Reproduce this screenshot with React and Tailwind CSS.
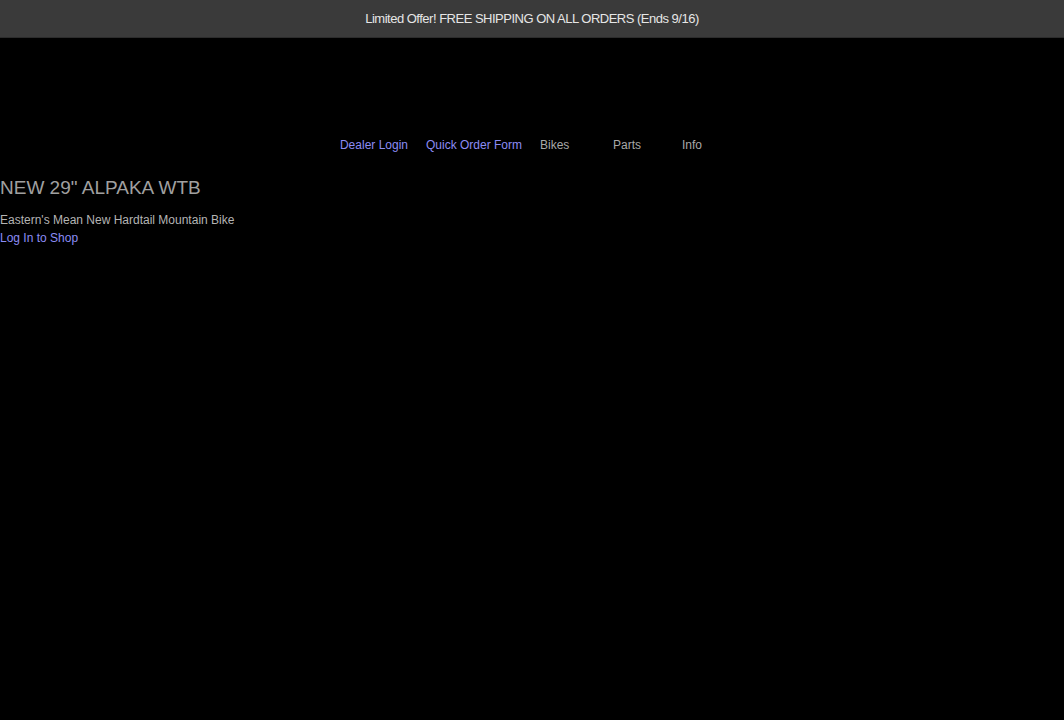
import React from 'react';

const navLinks = [
  { label: 'Dealer Login', blue: true, width: 'w-auto' },
  { label: 'Quick Order Form', blue: true, width: 'w-auto' },
  { label: 'Bikes', blue: false, width: 'w-[55px]' },
  { label: 'Parts', blue: false, width: 'w-[51px]' },
  { label: 'Info', blue: false, width: 'w-auto' },
];

const App = () => {
  return (
    <div className="min-h-screen bg-black font-['Liberation_Sans',Arial,sans-serif]">
      {/* promo bar */}
      <div className="h-[38px] bg-[#3a3a3a] border-b border-[#2c2c2c] flex items-center justify-center">
        <p className="text-[13px] tracking-[-0.5px] text-[#e6e6e6]">
          Limited Offer! FREE SHIPPING ON ALL ORDERS (Ends 9/16)
        </p>
      </div>

      {/* main nav */}
      <nav className="pt-[100px] flex justify-center pr-[22px]">
        <ul className="flex gap-[18px] text-[12px] leading-[14px]">
          {navLinks.map((link) => (
            <li key={link.label} className={link.width}>
              <a
                href="#"
                className={link.blue ? 'text-[#8c8cf5]' : 'text-[#a8a8a8]'}
              >
                {link.label}
              </a>
            </li>
          ))}
        </ul>
      </nav>

      {/* hero copy */}
      <section className="pt-[25px]">
        <h1 className="text-[19px] leading-[22px] font-light text-[#a0a0a0]">
          NEW 29" ALPAKA WTB
        </h1>
        <p className="mt-[12px] text-[12px] leading-[18px] text-[#b4b4b4]">
          Eastern's Mean New Hardtail Mountain Bike
        </p>
        <a href="#" className="block text-[12px] leading-[18px] text-[#8c8cf5]">
          Log In to Shop
        </a>
      </section>
    </div>
  );
};

export default App;
